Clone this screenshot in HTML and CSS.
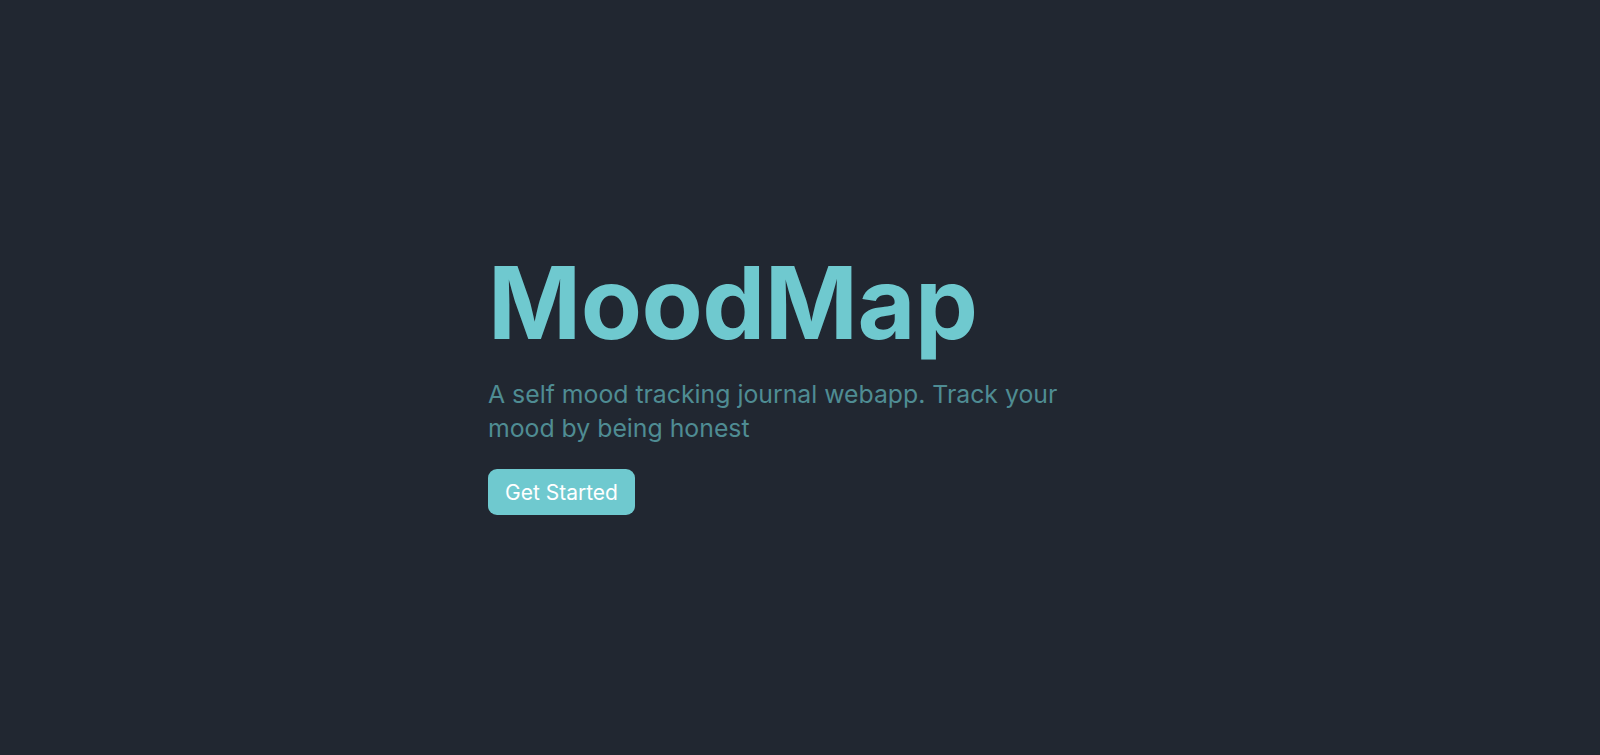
FILE: index.html
```html
<!DOCTYPE html>
<html lang="en">
<head>
<meta charset="utf-8">
<title>MoodMap</title>
<link rel="stylesheet" href="styles.css">
</head>
<body>
<main class="hero">
  <div class="hero-content">
    <h1 class="title">MoodMap</h1>
    <p class="subtitle">A self mood tracking journal webapp. Track your mood by being honest</p>
    <button class="cta">Get Started</button>
  </div>
</main>
</body>
</html>
```
FILE: styles.css
```css
html, body {
  margin: 0;
  padding: 0;
  height: 100%;
}
body {
  background: #212731;
  font-family: Inter, "Noto Sans", sans-serif;
}
.hero {
  box-sizing: border-box;
  min-height: 100vh;
  padding-top: 13px;
  display: flex;
  align-items: center;
  justify-content: center;
}
.hero-content {
  width: 624px;
  display: flex;
  flex-direction: column;
  align-items: flex-start;
}
.title {
  margin: 0;
  font-size: 100px;
  line-height: 1;
  font-weight: 700;
  color: #6fc9cf;
  letter-spacing: -0.5px;
}
.subtitle {
  margin: 24px 0 0;
  max-width: 600px;
  font-size: 24.8px;
  line-height: 34px;
  color: #4f8c93;
}
.cta {
  margin-top: 24px;
  padding: 10.5px 17px;
  border: none;
  border-radius: 9px;
  background: #6fc9cf;
  color: #ffffff;
  font-family: inherit;
  font-size: 21px;
  line-height: 25px;
}
```
